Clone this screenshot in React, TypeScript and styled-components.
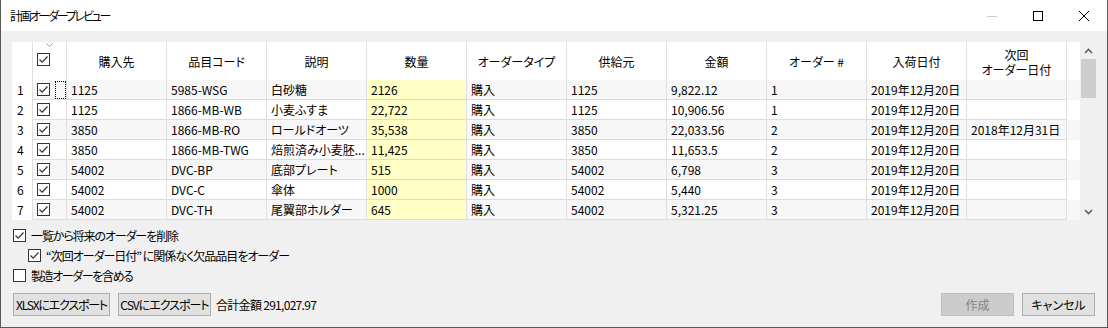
import styled, { createGlobalStyle } from 'styled-components';

const GlobalStyle = createGlobalStyle`
  html, body {
    margin: 0;
    padding: 0;
    background: #ffffff;
  }
  body {
    font-family: "Noto Sans CJK JP", "Noto Sans", sans-serif;
    font-size: 12px;
    color: #000;
    font-feature-settings: "palt";
  }
  * { box-sizing: border-box; }
`;

const Window = styled.div`
  width: 1108px;
  height: 328px;
  display: flex;
  flex-direction: column;
  background: #f0f0f0;
  border: 1px solid #5a5a5a;
  border-top: none;
`;

const TitleBar = styled.div`
  height: 31px;
  background: #ffffff;
  display: flex;
  align-items: center;
`;

const Title = styled.div`
  flex: 1;
  padding-left: 9px;
  line-height: 30px;
  letter-spacing: -2.2px;
`;

const CaptionButton = styled.div`
  width: 46px;
  height: 30px;
  display: flex;
  align-items: center;
  justify-content: center;
`;

const Body = styled.div`
  flex: 1;
  display: flex;
  flex-direction: column;
  padding: 11px 10px 10px 11px;
`;

const Grid = styled.div`
  height: 178px;
  display: flex;
  background: #ffffff;
`;

const Table = styled.div`
  flex: 1;
  display: flex;
  flex-direction: column;
`;

const cols = '21px 34px repeat(10, 100px) 1fr';

const HeaderRow = styled.div`
  display: grid;
  grid-template-columns: ${cols};
  height: 38px;
  background: #ffffff;
`;

const DataRow = styled.div<{ $striped: boolean }>`
  display: grid;
  grid-template-columns: ${cols};
  height: 20px;
  background: ${({ $striped }) => ($striped ? '#f7f7f7' : '#ffffff')};
`;

const HeadCell = styled.div`
  border-right: 1px solid #dfdfdf;
  display: flex;
  align-items: center;
  justify-content: center;
  text-align: center;
  line-height: 15px;
  padding-top: 1px;
`;

const CornerCell = styled.div`
  border-right: 1px solid #dfdfdf;
`;

const CheckHead = styled.div`
  border-right: 1px solid #dfdfdf;
  display: flex;
  flex-direction: column;
  padding: 1px 0 0 4px;
  gap: 6px;
`;

const Chevron = styled.svg`
  display: block;
  margin-left: 9px;
`;

const RowNum = styled.div`
  border-right: 1px solid #dfdfdf;
  background: #ffffff;
  padding-left: 5px;
  line-height: 20px;
`;

const CheckCell = styled.div`
  border-right: 1px solid #dfdfdf;
  border-bottom: 1px solid #dcdcdc;
  display: flex;
  align-items: center;
  padding-left: 4px;
  gap: 5px;
`;

const FocusBox = styled.span`
  width: 12px;
  height: 18px;
  border: 1px dotted #000;
`;

const Cell = styled.div<{ $qty?: boolean }>`
  border-right: 1px solid #dfdfdf;
  border-bottom: 1px solid #dcdcdc;
  background: ${({ $qty }) => ($qty ? '#ffffc6' : 'transparent')};
  padding: 0 4px;
  line-height: 19px;
  white-space: nowrap;
  overflow: hidden;
`;

const Filler = styled.div``;

const Scrollbar = styled.div`
  width: 17px;
  background: #f0f0f0;
  display: flex;
  flex-direction: column;
`;

const ScrollArrow = styled.div`
  height: 17px;
  display: flex;
  align-items: center;
  justify-content: center;
`;

const Thumb = styled.div`
  height: 39px;
  margin: 0 1px;
  background: #cdcdcd;
`;

const Track = styled.div`
  flex: 1;
`;

const Box = styled.span`
  width: 13px;
  height: 13px;
  border: 1px solid #333333;
  background: #ffffff;
  display: inline-flex;
  align-items: center;
  justify-content: center;
  flex: none;
`;

const Options = styled.div`
  display: flex;
  flex-direction: column;
  margin-top: 5px;
`;

const OptionRow = styled.label<{ $indent?: boolean; $ls: number }>`
  height: 20px;
  display: flex;
  align-items: center;
  gap: 5px;
  padding-left: ${({ $indent }) => ($indent ? '16px' : '1px')};
  letter-spacing: ${({ $ls }) => $ls}px;
`;

const Footer = styled.div`
  margin-top: 8px;
  display: flex;
  align-items: center;
  padding-left: 1px;
  padding-right: 2px;
`;

const Button = styled.button<{ $w: number; $ls?: number }>`
  width: ${({ $w }) => $w}px;
  height: 23px;
  padding: 0;
  font: inherit;
  letter-spacing: ${({ $ls }) => $ls ?? 0}px;
  color: #000;
  background: #e1e1e1;
  border: 1px solid #adadad;
  border-radius: 0;
  margin-right: 8px;
  white-space: nowrap;

  &:disabled {
    background: #cccccc;
    border-color: #bfbfbf;
    color: #838383;
  }
`;

const Total = styled.span`
  margin-left: -3px;
  letter-spacing: -0.7px;
`;

const Spacer = styled.div`
  flex: 1;
`;

const Check = () => (
  <Box>
    <svg width="11" height="11" viewBox="0 0 11 11">
      <polyline points="1.5,5.5 4.2,8.2 9.5,2.5" fill="none" stroke="#333" strokeWidth="1.2" />
    </svg>
  </Box>
);

const headers: string[][] = [
  ['購入先'],
  ['品目コード'],
  ['説明'],
  ['数量'],
  ['オーダータイプ'],
  ['供給元'],
  ['金額'],
  ['オーダー #'],
  ['入荷日付'],
  ['次回', 'オーダー日付'],
];

const rows: string[][] = [
  ['1125', '5985-WSG', '白砂糖', '2126', '購入', '1125', '9,822.12', '1', '2019年12月20日', ''],
  ['1125', '1866-MB-WB', '小麦ふすま', '22,722', '購入', '1125', '10,906.56', '1', '2019年12月20日', ''],
  ['3850', '1866-MB-RO', 'ロールドオーツ', '35,538', '購入', '3850', '22,033.56', '2', '2019年12月20日', '2018年12月31日'],
  ['3850', '1866-MB-TWG', '焙煎済み小麦胚...', '11,425', '購入', '3850', '11,653.5', '2', '2019年12月20日', ''],
  ['54002', 'DVC-BP', '底部プレート', '515', '購入', '54002', '6,798', '3', '2019年12月20日', ''],
  ['54002', 'DVC-C', '傘体', '1000', '購入', '54002', '5,440', '3', '2019年12月20日', ''],
  ['54002', 'DVC-TH', '尾翼部ホルダー', '645', '購入', '54002', '5,321.25', '3', '2019年12月20日', ''],
];

const Arrow = ({ up }: { up?: boolean }) => (
  <svg width="9" height="6" viewBox="0 0 9 6">
    <polyline
      points={up ? '1,5 4.5,1.5 8,5' : '1,1 4.5,4.5 8,1'}
      fill="none"
      stroke="#606060"
      strokeWidth="1.6"
    />
  </svg>
);

export default function App() {
  return (
    <>
      <GlobalStyle />
      <Window>
        <TitleBar>
          <Title>計画オーダープレビュー</Title>
          <CaptionButton>
            <svg width="10" height="10" viewBox="0 0 10 10">
              <line x1="0" y1="5.5" x2="10" y2="5.5" stroke="#cccccc" strokeWidth="1" />
            </svg>
          </CaptionButton>
          <CaptionButton>
            <svg width="10" height="10" viewBox="0 0 10 10">
              <rect x="0.5" y="0.5" width="9" height="9" fill="none" stroke="#000" strokeWidth="1" />
            </svg>
          </CaptionButton>
          <CaptionButton>
            <svg width="10" height="10" viewBox="0 0 10 10">
              <path d="M0 0 L10 10 M10 0 L0 10" stroke="#000" strokeWidth="1" />
            </svg>
          </CaptionButton>
        </TitleBar>
        <Body>
          <Grid>
            <Table>
              <HeaderRow>
                <CornerCell />
                <CheckHead>
                  <Chevron width="7" height="4" viewBox="0 0 7 4">
                    <polyline points="0.5,0.5 3.5,3.5 6.5,0.5" fill="none" stroke="#9a9a9a" strokeWidth="1" />
                  </Chevron>
                  <Check />
                </CheckHead>
                {headers.map((h, i) => (
                  <HeadCell key={i}>
                    <div>
                      {h.map((line, j) => (
                        <div key={j}>{line}</div>
                      ))}
                    </div>
                  </HeadCell>
                ))}
                <Filler />
              </HeaderRow>
              {rows.map((r, i) => (
                <DataRow key={i} $striped={i % 2 === 0}>
                  <RowNum>{i + 1}</RowNum>
                  <CheckCell>
                    <Check />
                    {i === 0 && <FocusBox />}
                  </CheckCell>
                  {r.map((v, j) => (
                    <Cell key={j} $qty={j === 3}>
                      {v}
                    </Cell>
                  ))}
                  <Filler />
                </DataRow>
              ))}
            </Table>
            <Scrollbar>
              <ScrollArrow>
                <Arrow up />
              </ScrollArrow>
              <Thumb />
              <Track />
              <ScrollArrow>
                <Arrow />
              </ScrollArrow>
            </Scrollbar>
          </Grid>
          <Options>
            <OptionRow $ls={-1.1}>
              <Check />
              一覧から将来のオーダーを削除
            </OptionRow>
            <OptionRow $indent $ls={-1}>
              <Check />
              “次回オーダー日付” に関係なく欠品品目をオーダー
            </OptionRow>
            <OptionRow $ls={-1.4}>
              <Box />
              製造オーダーを含める
            </OptionRow>
          </Options>
          <Footer>
            <Button $w={97} $ls={-1.2}>
              XLSXにエクスポート
            </Button>
            <Button $w={93} $ls={-1}>
              CSVにエクスポート
            </Button>
            <Total>合計金額 291,027.97</Total>
            <Spacer />
            <Button $w={73} disabled>
              作成
            </Button>
            <Button $w={73} style={{ marginRight: 0 }}>
              キャンセル
            </Button>
          </Footer>
        </Body>
      </Window>
    </>
  );
}
